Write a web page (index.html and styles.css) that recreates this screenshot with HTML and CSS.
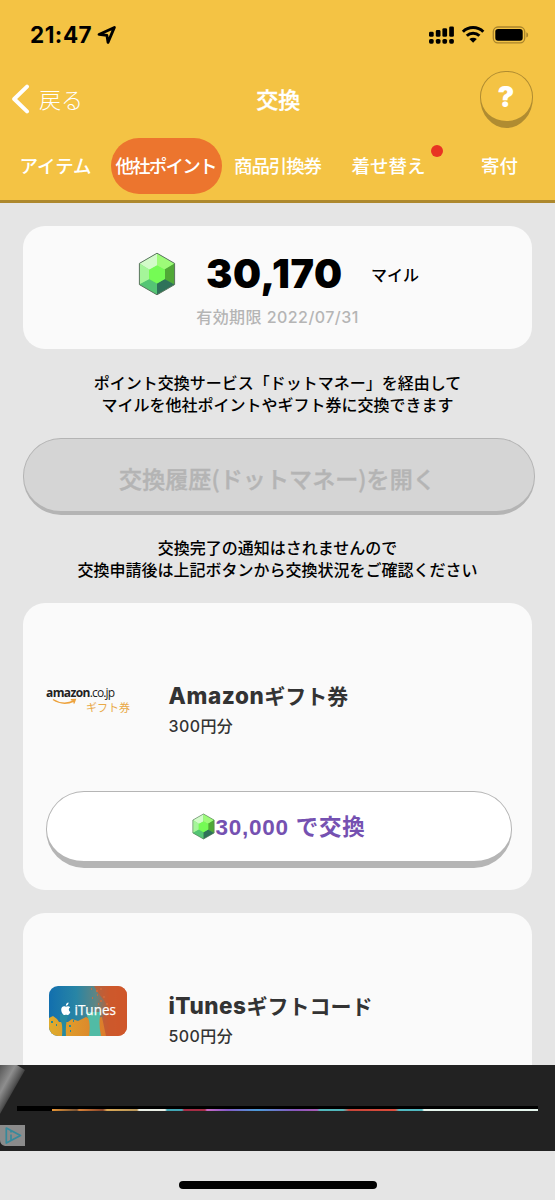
FILE: index.html
```
<!DOCTYPE html>
<html lang="ja">
<head>
<meta charset="utf-8">
<title>交換</title>
<link rel="stylesheet" href="styles.css">
</head>
<body>
<svg class="defs" width="0" height="0" aria-hidden="true">
  <symbol id="gem" viewBox="0 0 38 44">
    <path d="M19 1.2 36.6 11.4V32.6L19 42.8 1.4 32.6V11.4Z" fill="#5bdc55"/>
    <path d="M19 1.2V14L11.5 18 1.4 11.4Z" fill="#d2fbc9"/>
    <path d="M19 1.2 36.6 11.4 26.5 18 19 14Z" fill="#9dfb78"/>
    <path d="M1.4 11.4 11.5 17.5V27.5L1.4 32.6Z" fill="#a5f59a"/>
    <path d="M36.6 11.4V32.6L26.5 27.5V17.5Z" fill="#50a836"/>
    <path d="M1.4 32.6 11.5 27 19 31.5V42.8Z" fill="#54c574"/>
    <path d="M36.6 32.6 26.5 27 19 31.5V42.8Z" fill="#2f7259"/>
    <path d="M19 13.2 27 17.8V27L19 31.6 11 27V17.8Z" fill="#75fb55"/>
    <path d="M19 1.2 36.6 11.4V32.6L19 42.8 1.4 32.6V11.4Z" fill="none" stroke="#5d7562" stroke-width="1"/>
  </symbol>
</svg>
<header class="header">
  <div class="status">
    <span class="time">21:47</span>
    <svg class="locate" width="20" height="20" viewBox="0 0 20 20"><path d="M2 9.4 17.4 2.4 11 17.4 9.9 10.4Z" fill="none" stroke="#000" stroke-width="2.8" stroke-linejoin="round"/></svg>
    <svg class="signals" width="100" height="20" viewBox="0 0 100 20">
      <g fill="#000">
        <rect x="0" y="6.8" width="4.7" height="5" rx="1.4"/><rect x="6.8" y="5" width="4.7" height="6.8" rx="1.4"/><rect x="13.4" y="3.2" width="4.7" height="8.6" rx="1.4"/><rect x="20.2" y="1.4" width="4.7" height="10.4" rx="1.4"/>
        <rect x="0" y="14" width="4.7" height="4.7" rx="1.6"/><rect x="6.8" y="14" width="4.7" height="4.7" rx="1.6"/><rect x="13.4" y="14" width="4.7" height="4.7" rx="1.6"/><rect x="20.2" y="14" width="4.7" height="4.7" rx="1.6"/>
      </g>
      <path d="M33.9 6.8a14.5 14.5 0 0 1 20.4 0M37.8 10.8a9 9 0 0 1 12.6 0" fill="none" stroke="#000" stroke-width="3"/>
      <path d="M44.1 17.8 40.4 14.1a5.4 5.4 0 0 1 7.4 0Z" fill="#000"/>
      <rect x="64.3" y="2" width="31.4" height="15.8" rx="4.6" fill="none" stroke="#a9842b" stroke-width="1.3"/>
      <rect x="66.3" y="4" width="27.4" height="11.8" rx="2.8" fill="#000"/>
      <path d="M97.3 7.2q1.9.7 1.9 2.7t-1.9 2.7Z" fill="#a9842b"/>
    </svg>
  </div>
  <div class="nav">
    <div class="back">
      <svg width="20" height="30" viewBox="0 0 20 30"><path d="M16 2.6 3.2 15 16 27.4" fill="none" stroke="#fff" stroke-width="4" stroke-linecap="round" stroke-linejoin="round"/></svg>
      <span>戻る</span>
    </div>
    <h1 class="title">交換</h1>
    <div class="help"><span>?</span></div>
  </div>
  <nav class="tabs">
    <a class="tab">アイテム</a>
    <a class="tab active">他社ポイント</a>
    <a class="tab fine">商品引換券</a>
    <a class="tab">着せ替え<i class="dot"></i></a>
    <a class="tab">寄付</a>
  </nav>
</header>
<main class="content">
  <section class="card balance">
    <div class="amount">
      <svg class="gem" width="38" height="44"><use href="#gem"/></svg>
      <strong>30,170</strong>
      <span>マイル</span>
    </div>
    <p class="expiry">有効期限 2022/07/31</p>
  </section>
  <p class="note">ポイント交換サービス「ドットマネー」を経由して<br>マイルを他社ポイントやギフト券に交換できます</p>
  <div class="history">交換履歴(ドットマネー)を開く</div>
  <p class="note second">交換完了の通知はされませんので<br>交換申請後は上記ボタンから交換状況をご確認ください</p>
  <section class="card gift">
    <div class="row">
      <div class="logo amazon">
        <span class="brand"><b>amazon</b>.co.jp</span>
        <svg class="smile" width="26" height="8" viewBox="0 0 26 8"><path d="M1 1.5Q11 8 22 3M18.8 1.8 23.3 1.6 21.8 5.4" fill="none" stroke="#eda23c" stroke-width="1.4"/></svg>
        <span class="kind">ギフト券</span>
      </div>
      <div class="info">
        <h2 class="name"><span class="amazon-name">Amazon</span>ギフト券</h2>
        <p class="value">300円分</p>
      </div>
    </div>
    <div class="redeem"><svg width="23" height="27"><use href="#gem"/></svg><span>30,000 で交換</span></div>
  </section>
  <section class="card gift">
    <div class="row">
      <div class="logo">
        <svg class="itunes" width="78" height="50" viewBox="0 0 78 50">
          <defs>
            <linearGradient id="paint" x1="0" x2="1"><stop offset="0" stop-color="#126fae"/><stop offset=".35" stop-color="#2885a5"/><stop offset=".6" stop-color="#5f8583"/><stop offset=".78" stop-color="#c65a2d"/><stop offset="1" stop-color="#cf5129"/></linearGradient>
            <linearGradient id="gold" x1="0" x2="1"><stop offset="0" stop-color="#dfac2c"/><stop offset="1" stop-color="#dc7b2b"/></linearGradient>
            <clipPath id="plate"><rect width="78" height="50" rx="9"/></clipPath>
          </defs>
          <g clip-path="url(#plate)">
            <rect width="78" height="50" fill="url(#paint)"/>
            <path d="M45 0H78V50H52L54 30 61 24 55 14 49 7Z" fill="#cf582b" opacity=".75"/>
            <path d="M0 32 4 30 8 33 10 36 19 36 23 33 29 35 37 31 41 33 53 31 57 50H0Z" fill="url(#gold)"/>
            <path d="M11 28H20Q16 36 17 50H13Q14 37 11 34Z" fill="#278aa0"/>
            <path d="M38 26H52Q49 36 52 50H40Q42 36 38 30Z" fill="#51bba5"/>
            <path d="M42 3h1M47 5h2M51 3h2M48 9h1M54 11h2M51 15h2M57 18h2M43 12h1M49 18h1M55 22h2" stroke="#d56b38" stroke-width="1.5"/>
            <path d="M2 36h2M7 39h1M20 40h2M24 35h1M21 45h1" stroke="#28899a" stroke-width="2"/>
            <path d="M16.8 20.8C14.4 19.4 12 21.2 12.2 24c.2 3 2.2 5.4 3.6 5 1-.5 1.7-.4 2.6 0 1.3.3 2.4-1.6 3-3-2.1-1-2.1-3.7-.2-4.7-1.1-1.3-2.8-1.2-4.4-.5ZM16.8 19.8c0-1.8 1.1-3 2.8-3.2 0 1.8-1.1 3.1-2.8 3.2Z" fill="#fff"/>
            <text class="itunes-text" x="25.5" y="29.3" textLength="41.5" lengthAdjust="spacingAndGlyphs">iTunes</text>
          </g>
        </svg>
      </div>
      <div class="info">
        <h2 class="name"><span class="itunes-name">iTunes</span>ギフトコード</h2>
        <p class="value">500円分</p>
      </div>
    </div>
  </section>
</main>
<aside class="ad">
  <div class="shine"></div>
  <div class="strip"></div>
  <svg class="choices" width="25" height="21" viewBox="0 0 25 21"><path d="M0 0H25V21H5Q0 20 0 15Z" fill="#8b8b8b"/><path d="M6.3 3 20.5 10.5 6.3 18ZM11 9.5V15M11 6V7.6" fill="none" stroke="#368a9c" stroke-width="1.7" stroke-linejoin="round"/></svg>
</aside>
<footer class="home"><div class="indicator"></div></footer>
</body>
</html>
```
FILE: styles.css
```
* { box-sizing: border-box; }
body {
  margin: 0;
  width: 555px;
  height: 1200px;
  overflow: hidden;
  display: flex;
  flex-direction: column;
  background: #e5e5e5;
  color: #000;
  font-family: Inter, "Noto Sans CJK JP", sans-serif;
}
h1, h2, p { margin: 0; }
.defs { position: absolute; }
.header {
  flex: none;
  height: 203px;
  background: #f4c344;
  border-bottom: 3px solid #ad882d;
  color: #fff;
}
.status {
  height: 70px;
  padding: 0 26px 0 30px;
  display: flex;
  align-items: center;
  color: #000;
}
.time { font-size: 22.5px; font-weight: 700; line-height: 30px; width: 67px; letter-spacing: .5px; white-space: nowrap; }
.signals { margin-left: auto; }
.nav {
  height: 58px;
  padding: 0 22.5px 0 11px;
  display: grid;
  grid-template-columns: 150px 1fr 137px;
  align-items: center;
}
.back { display: flex; align-items: center; gap: 8px; font-size: 22px; font-weight: 300; line-height: 30px; }
.back span { padding-top: 2px; }
.title { padding-top: 2px; font-size: 22px; font-weight: 500; line-height: 30px; text-align: center; -webkit-text-stroke: .3px #fff; }
.help {
  justify-self: end;
  width: 53px;
  height: 57px;
  border: 1px solid #b08c31;
  border-bottom-width: 7px;
  border-radius: 26px 26px 27px 27px / 26px 26px 31px 31px;
  display: grid;
  place-items: center;
  font-size: 28px;
  font-weight: 900;
  line-height: 40px;
}
.help span { padding-top: 2px; }
.tabs { margin-top: 10px; height: 56px; display: grid; grid-template-columns: repeat(5, 111px); }
.tab {
  position: relative;
  display: flex;
  align-items: center;
  justify-content: center;
  border-radius: 28px;
  font-size: 18.5px;
  font-weight: 500;
  white-space: nowrap;
  padding-bottom: 2px;
}
.active { background: #ec752e; letter-spacing: -1.8px; padding-right: 2px; }
.fine { letter-spacing: -1.1px; }
.dot { position: absolute; left: 98px; top: 7px; width: 12px; height: 12px; border-radius: 50%; background: #e83323; }
.content { flex: none; height: 862px; overflow: hidden; padding: 23px 23px 0; }
.card { background: #fafafa; border-radius: 22px; }
.balance { height: 123px; padding-top: 24px; }
.amount { display: flex; align-items: center; height: 48px; padding-left: 115px; }
.amount strong { margin-left: 30px; width: 138px; font-size: 39.5px; font-weight: 900; letter-spacing: .6px; line-height: 48px; padding-bottom: 1px; white-space: nowrap; }
.amount span { margin-left: 27px; font-size: 16px; font-weight: 500; }
.expiry { margin-top: 7px; text-align: center; font-size: 16px; line-height: 24px; font-weight: 500; letter-spacing: .45px; color: #b5b5b5; }
.note { margin-top: 24px; text-align: center; font-size: 16px; line-height: 21.5px; font-weight: 500; white-space: nowrap; }
.history {
  margin: 22px -3px 0 0;
  height: 77px;
  border: 1.3px solid #b4b4b4;
  border-bottom-width: 4px;
  border-radius: 38px;
  background: #d5d5d5;
  color: #b4b4b4;
  font-family: "Noto Sans CJK JP", sans-serif;
  font-size: 23px;
  font-weight: 500;
  letter-spacing: .1px;
  -webkit-text-stroke: .4px #b4b4b4;
  line-height: 78px;
  text-align: center;
  padding-right: 3px;
}
.second { margin: 23px 0 22px; }
.gift { height: 287px; margin-bottom: 23px; padding: 78px 20px 0 23px; }
.row { height: 110px; display: grid; grid-template-columns: 122.5px 1fr; }
.info { color: #333; white-space: nowrap; }
.name { font-size: 21px; font-weight: 700; line-height: 30px; }
.name span { font-size: 22.5px; font-weight: 800; }
.amazon-name { letter-spacing: .6px; }
.itunes-name { letter-spacing: .5px; }
.value { font-size: 16px; font-weight: 500; line-height: 28px; letter-spacing: .4px; }
.logo { padding-left: 3px; padding-top: 5px; }
.amazon { display: grid; grid-template: 14px 16px / 40px 1fr; padding: 5px 0 0; align-content: start; line-height: 14px; }
.brand { grid-column: 1 / 3; font-family: "Open Sans", sans-serif; font-size: 12px; letter-spacing: -.9px; color: #222; white-space: nowrap; }
.brand b { letter-spacing: -.6px; }
.smile { margin: -2px 0 0 6px; }
.kind { font-family: "Noto Sans CJK JP", sans-serif; font-size: 11px; color: #e9a947; white-space: nowrap; }
.itunes { display: block; margin-top: -10px; }
.itunes-text { font: 15px "Open Sans", sans-serif; fill: #fff; stroke: #fff; stroke-width: .25px; }
.redeem {
  height: 77px;
  border: 1.3px solid #b5b5b5;
  border-bottom-width: 7px;
  border-radius: 38px;
  background: #fff;
  color: #7551b1;
  display: flex;
  align-items: center;
  justify-content: center;
  font-family: "Liberation Sans", "Noto Sans CJK JP", sans-serif;
  font-size: 22.5px;
  font-weight: 700;
  letter-spacing: .75px;
  white-space: nowrap;
}
.redeem span { line-height: 30px; padding-top: 2px; }
.ad { position: relative; flex: none; height: 86px; background: #222; overflow: hidden; }
.shine { position: absolute; left: 0; top: 0; width: 25px; height: 49px; background: linear-gradient(119deg, #555 0%, #8e8e8e 30%, #555 48%, #222 60%); clip-path: polygon(0 0, 68% 0, 100% 10%, 0 100%); }
.strip {
  position: absolute;
  left: 17px;
  top: 41px;
  width: 521px;
  height: 5px;
  border-top: 3px solid #000;
  background: linear-gradient(90deg, #000 35px, #e79535 35px, #765235 60px, #d88338 62px, #864329 86px, #dba956 90px, #b79559 120px, #e9eee5 122px, #e9eee5 148px, #42a6b4 150px, #42a6b4 165px, #a52d45 167px, #a52d45 188px, #c86ac4 190px, #845bc7 211px, #4a9bd7 240px, #8957bd 278px, #a65bb4 300px, #52b7bb 303px, #52b7bb 326px, #c7463a 332px, #dc4c3b 378px, #51b8c0 382px, #51b8c0 405px, #e5f5ed 407px, #e5f5ed 100%);
}
.choices { position: absolute; left: 0; top: 60px; }
.home { height: 49px; padding-top: 30px; }
.indicator { width: 198px; height: 8px; margin-left: 179px; border-radius: 4px; background: #000; }
```
